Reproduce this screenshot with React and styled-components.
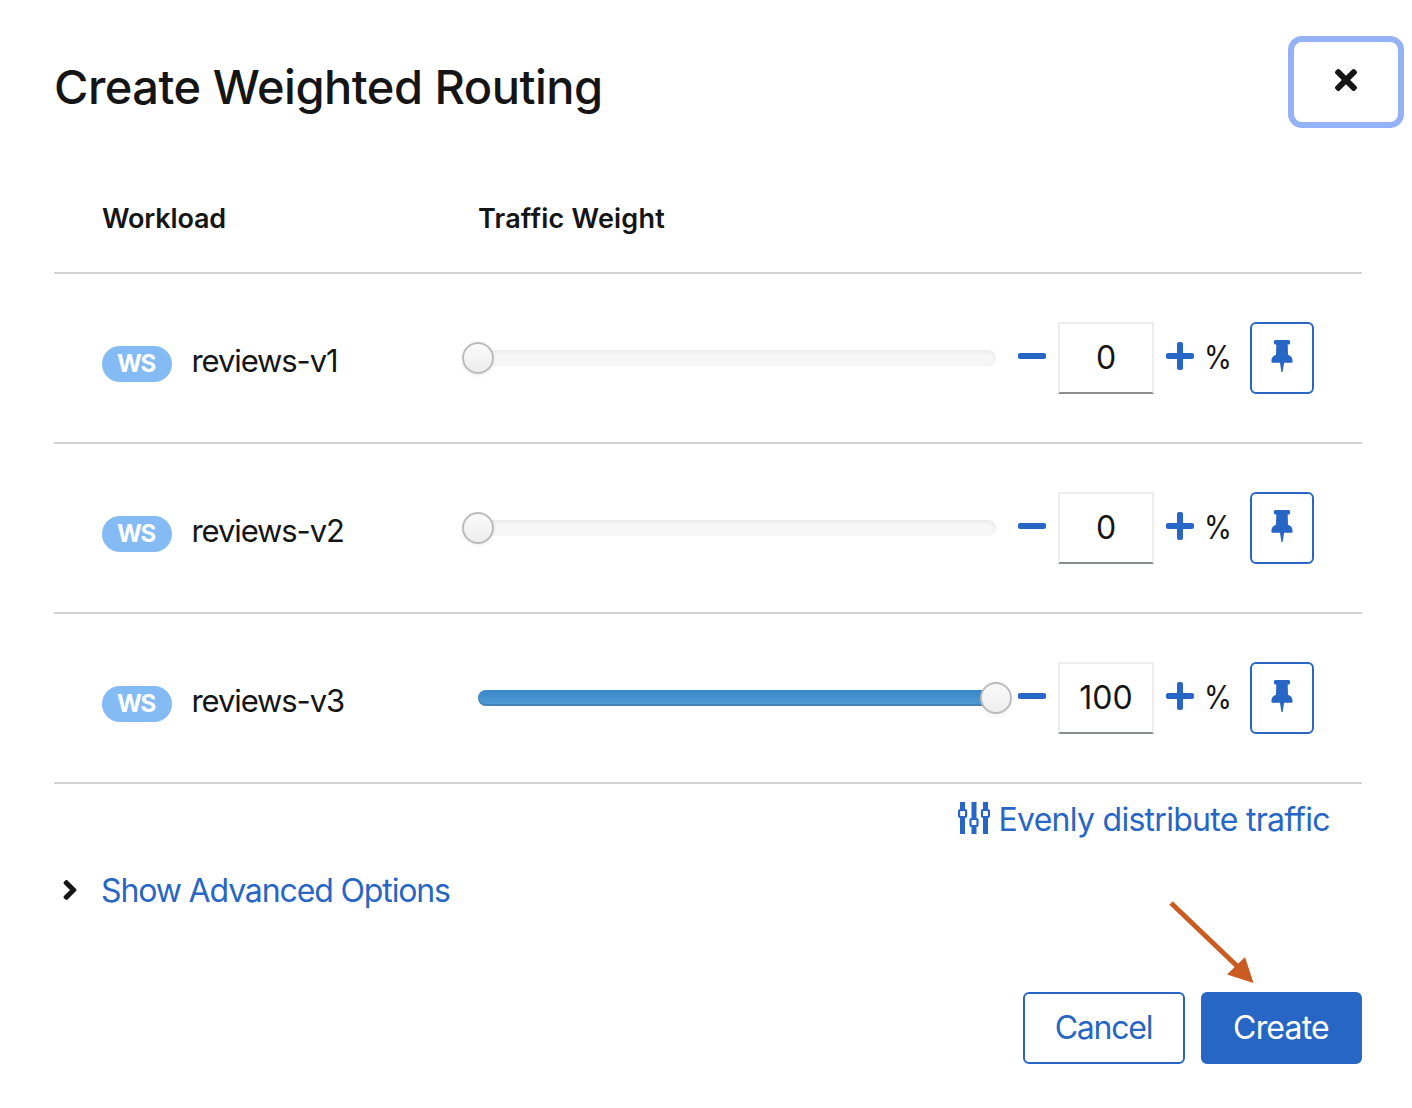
import React, { useState } from "react";
import styled, { createGlobalStyle } from "styled-components";
import { FaTimes, FaMinus, FaPlus, FaAngleRight } from "react-icons/fa";

const blue = "#2766c4";

const GlobalStyle = createGlobalStyle`
  * { box-sizing: border-box; }
  body { margin: 0; background: #fff; color: #151515; font-family: Inter, "Liberation Sans", sans-serif; }
  button, input { font: inherit; color: inherit; margin: 0; }
`;

const Label = styled.span`
  display: inline-block;
  white-space: nowrap;
  letter-spacing: ${(p) => p.$track || 0}px;
`;

const Modal = styled.main`
  position: relative;
  width: 1412px;
  height: 1108px;
  padding: 36px 50px 0 54px;
  background: #fff;
`;

const Header = styled.header`
  display: flex;
  justify-content: space-between;
  height: 132px;
  margin-right: -42px;
`;

const Title = styled.h1`
  margin: 21px 0 0;
  font-size: 47px;
  font-weight: 500;
  line-height: 60px;
`;

const CloseButton = styled.button`
  display: flex;
  align-items: center;
  justify-content: center;
  width: 116px;
  height: 92px;
  padding: 0 0 4px;
  border: 6px solid #94b2f5;
  border-radius: 14px;
  background: #fff;
  font-size: 32px;
`;

const HeadRow = styled.div`
  display: grid;
  grid-template-columns: 376px 1fr;
  height: 106px;
  padding: 35px 48px 0;
  border-bottom: 2px solid #d2d2d2;
  font-size: 27px;
  font-weight: 600;
  line-height: 32px;
`;

const Row = styled.div`
  display: grid;
  grid-template-columns: 376px 518px 1fr;
  height: 170px;
  padding: 48px 48px 0;
  border-bottom: 2px solid #d2d2d2;
`;

const Workload = styled.div`
  display: flex;
  height: 80px;
  gap: 20px;
  font-size: 31px;
  line-height: 36px;
  padding-top: 24px;
`;

const Name = styled.div`
  margin: -3px 0 0 -0.5px;
`;

const Badge = styled.div`
  display: flex;
  align-items: center;
  justify-content: center;
  width: 70px;
  height: 36px;
  padding-right: 2px;
  border-radius: 18px;
  background: #84bbf4;
  color: #fff;
  font-size: 24px;
  font-weight: 700;
`;

const Track = styled.div`
  display: flex;
  align-items: center;
  height: 16px;
  margin-top: 28px;
  border-radius: 8px;
  background: #f6f6f6;
  box-shadow: inset 0 2px 4px rgba(0, 0, 0, 0.06);
`;

const Fill = styled.div`
  height: 16px;
  border-radius: 8px 0 0 8px;
  background: linear-gradient(#3a87c8, #519bd6);
  box-shadow: inset 0 -2px 0 rgba(0, 0, 0, 0.15);
`;

const Thumb = styled.div`
  flex: none;
  width: 32px;
  height: 32px;
  margin: 0 -16px;
  border: 2px solid #bbb;
  border-radius: 50%;
  background: linear-gradient(#fafafa, #ededed);
  box-shadow: 0 2px 4px rgba(0, 0, 0, 0.06);
`;

const Controls = styled.div`
  display: flex;
  align-items: flex-start;
  padding-left: 22px;
`;

const StepButton = styled.button`
  display: flex;
  align-items: center;
  justify-content: center;
  width: 28px;
  height: 68px;
  padding: 0;
  border: 0;
  background: none;
  color: ${blue};
  font-size: 32px;

  svg { flex: none; }
`;

const WeightInput = styled.input`
  width: 96px;
  height: 72px;
  margin: 0 12px;
  padding: 0 0 2px;
  border: 2px solid #ededed;
  border-bottom-color: #8a8d90;
  border-radius: 0;
  background: #fff;
  font-size: 32px;
  text-align: center;
  outline: none;
`;

const Percent = styled.div`
  width: 24px;
  margin-left: 10px;
  margin-right: 2px;
  font-size: 32px;
  line-height: 72px;
  transform: scaleX(0.89);
  transform-origin: left center;
`;

const PinButton = styled.button`
  display: flex;
  align-items: flex-start;
  justify-content: center;
  width: 64px;
  height: 72px;
  margin-left: 20px;
  padding: 16px 0 0;
  border: 2px solid ${blue};
  border-radius: 6px;
  background: #fff;
  color: ${blue};
`;

const LinkButton = styled.button`
  display: flex;
  align-items: center;
  padding: 0;
  border: 0;
  background: none;
  color: ${blue};
  font-size: 32px;
  line-height: 40px;
`;

const Distribute = styled(LinkButton)`
  gap: 8.5px;
  width: 376px;
  margin: 14px 0 0 904px;

  svg { flex: none; }
  span { padding-top: 2px; margin-bottom: -2px; }
`;

const Advanced = styled.div`
  display: flex;
  align-items: center;
  height: 40px;
  margin-top: 32px;
  font-size: 32px;

  > svg { flex: none; margin-right: 15px; }
  span { padding-top: 2px; }
`;

const Footer = styled.footer`
  display: flex;
  justify-content: flex-end;
  gap: 16px;
  margin-top: 82px;
`;

const ActionButton = styled.button`
  display: flex;
  align-items: center;
  justify-content: center;
  width: ${(p) => (p.$primary ? 161 : 162)}px;
  height: 72px;
  padding: 0 1px 2px 0;
  border: 2px solid ${blue};
  border-radius: 6px;
  background: ${(p) => (p.$primary ? blue : "#fff")};
  color: ${(p) => (p.$primary ? "#fff" : blue)};
  font-size: 32px;
`;

const Arrow = styled.svg`
  position: absolute;
  left: 1164px;
  top: 896px;
  pointer-events: none;
`;

const PinIcon = () => (
  <svg width="22" height="32" viewBox="0 0 22 32" fill="currentColor">
    <path d="M4.500 0h13c1 0 1.600.9 1.600 2.300s-.6 2.300-1.600 2.300h-.8l.3 10.200c3 .9 4.600 3.200 4.600 6.600 0 .9-.5 1.400-1.300 1.400h-7.200L11.600 32h-1.200L9 22.800H1.700c-.8 0-1.300-.5-1.300-1.400 0-3.400 1.600-5.700 4.600-6.600l.3-10.200h-.8c-1 0-1.600-.9-1.600-2.300S3.500 0 4.500 0z" />
  </svg>
);

const SlidersIcon = () => (
  <svg width="32" height="32" viewBox="0 0 32 32" fill="currentColor">
    <path d="M2 0h5v8H2zM2 16h5v16H2zM13.500 0h5v17h-5zM13.500 25h5v7h-5zM25 0h5v8h-5zM25 16h5v16h-5z" />
    <g fill="none" stroke="currentColor" strokeWidth="2.200">
      <rect x="1.100" y="8" width="7" height="7" rx="1" />
      <rect x="12.500" y="17" width="7" height="7" rx="1" />
      <rect x="24" y="8" width="6.900" height="7" rx="1" />
    </g>
  </svg>
);

const workloads = [
  { name: "reviews-v1", weight: 0 },
  { name: "reviews-v2", weight: 0 },
  { name: "reviews-v3", weight: 100 },
];

export default function App() {
  const [rows, setRows] = useState(workloads);
  const setWeight = (index, value) => {
    const weight = Math.max(0, Math.min(100, Number(value) || 0));
    setRows(rows.map((row, i) => (i === index ? { ...row, weight } : row)));
  };

  return (
    <>
      <GlobalStyle />
      <Modal>
        <Header>
          <Title><Label $track={-0.5}>Create Weighted Routing</Label></Title>
          <CloseButton aria-label="Close"><FaTimes /></CloseButton>
        </Header>
        <HeadRow>
          <div><Label $track={-0.15}>Workload</Label></div>
          <div><Label $track={0.2}>Traffic Weight</Label></div>
        </HeadRow>
        {rows.map((row, i) => (
          <Row key={row.name}>
            <Workload>
              <Badge><Label $track={-1.2}>WS</Label></Badge>
              <Name><Label $track={-1.1}>{row.name}</Label></Name>
            </Workload>
            <Track>
              <Fill style={{ width: `${row.weight}%` }} />
              <Thumb />
            </Track>
            <Controls>
              <StepButton aria-label="Decrease" onClick={() => setWeight(i, row.weight - 1)}><FaMinus /></StepButton>
              <WeightInput value={row.weight} onChange={(e) => setWeight(i, e.target.value)} />
              <StepButton aria-label="Increase" onClick={() => setWeight(i, row.weight + 1)}><FaPlus /></StepButton>
              <Percent>%</Percent>
              <PinButton aria-label="Pin weight"><PinIcon /></PinButton>
            </Controls>
          </Row>
        ))}
        <Distribute><SlidersIcon /><Label $track={-0.72}>Evenly distribute traffic</Label></Distribute>
        <Advanced>
          <FaAngleRight />
          <LinkButton><Label $track={-1.13}>Show Advanced Options</Label></LinkButton>
        </Advanced>
        <Footer>
          <ActionButton><Label $track={-1.2}>Cancel</Label></ActionButton>
          <ActionButton $primary><Label $track={-0.8}>Create</Label></ActionButton>
        </Footer>
        <Arrow width="92" height="90" viewBox="0 0 92 90" fill="none">
          <path d="M7 7l66 63" stroke="#c95b23" strokeWidth="5" />
          <path d="M89.500 87L63 78.500l18-17.500z" fill="#c95b23" />
        </Arrow>
      </Modal>
    </>
  );
}
